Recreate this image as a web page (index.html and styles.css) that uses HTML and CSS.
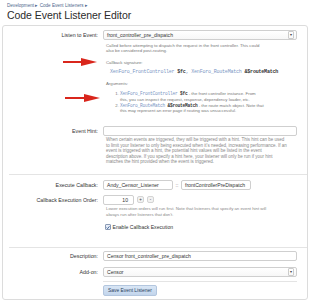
FILE: index.html
```html
<!DOCTYPE html>
<html>
<head>
<meta charset="utf-8">
<link rel="stylesheet" href="styles.css">
</head>
<body>
<div class="breadcrumb"><span>Development</span> ▸ <span>Code Event Listeners</span> ▸</div>
<h1 class="title">Code Event Listener Editor</h1>
<form class="form">
  <div class="row">
    <label class="label">Listen to Event:</label>
    <div class="ctrl">
      <div class="select"><span>front_controller_pre_dispatch</span><span class="arrow">▾</span></div>
      <div class="explain">
        <p class="desc">Called before attempting to dispatch the request in the front controller. This could<br>also be considered post-routing.</p>
        <p class="sub">Callback signature:</p>
        <p class="code sig"><span class="cls">XenForo_FrontController</span> <b>$fc</b>, <span class="cls">XenForo_RouteMatch</span> <b>&amp;$routeMatch</b></p>
        <p class="sub">Arguments:</p>
        <ol class="args">
          <li><span class="code"><span class="cls">XenForo_FrontController</span> <b>$fc</b></span> - the front controller instance. From<br>this, you can inspect the request, response, dependency loader, etc.</li>
          <li><span class="code"><span class="cls">XenForo_RouteMatch</span> <b>&amp;$routeMatch</b></span> - the route match object. Note that<br>this may represent an error page if routing was unsuccessful.</li>
        </ol>
      </div>
    </div>
  </div>
  <div class="row hint-row">
    <label class="label">Event Hint:</label>
    <div class="ctrl">
      <div class="input wide"></div>
      <p class="note hint">When certain events are triggered, they will be triggered with a hint. This hint can be used<br>to limit your listener to only being executed when it's needed, increasing performance. If an<br>event is triggered with a hint, the potential hint values will be listed in the event<br>description above. If you specify a hint here, your listener will only be run if your hint<br>matches the hint provided when the event is triggered.</p>
    </div>
  </div>
  <hr class="divider d1">
  <div class="row">
    <label class="label">Execute Callback:</label>
    <div class="ctrl callback">
      <div class="input cb-class">Andy_Censor_Listener</div>
      <span class="sep">::</span>
      <div class="input cb-method">frontControllerPreDispatch</div>
    </div>
  </div>
  <div class="row order-row">
    <label class="label">Callback Execution Order:</label>
    <div class="ctrl">
      <div class="spin">
        <div class="input num">10</div>
        <span class="btn-s">+</span>
        <span class="btn-s">-</span>
      </div>
      <p class="note order">Lower execution orders will run first. Note that listeners that specify an event hint will<br>always run after listeners that don't.</p>
      <div class="check"><span class="box"><svg viewBox="0 0 10 10" width="5" height="5"><path d="M1.5 5 L4 7.8 L8.8 1.8" fill="none" stroke="#2a4f8a" stroke-width="2"/></svg></span>Enable Callback Execution</div>
    </div>
  </div>
  <hr class="divider d2">
  <div class="row">
    <label class="label">Description:</label>
    <div class="ctrl"><div class="input wide">Censor front_controller_pre_dispatch</div></div>
  </div>
  <div class="row addon-row">
    <label class="label">Add-on:</label>
    <div class="ctrl"><div class="select"><span>Censor</span><span class="arrow">▾</span></div></div>
  </div>
  <hr class="divider last">
  <div class="row submit-row">
    <span></span>
    <div class="ctrl"><span class="button">Save Event Listener</span></div>
  </div>
  <div class="annot a1"></div>
  <div class="annot a2"></div>
</form>
</body>
</html>
```

FILE: styles.css
```css
html, body {
  margin: 0;
  padding: 0;
  background: #fff;
}
body {
  font-family: "Liberation Sans", Arial, sans-serif;
  color: #333;
  width: 317px;
  height: 300px;
  overflow: hidden;
}
p { margin: 0; }
.breadcrumb {
  font-size: 4.6px;
  line-height: 5px;
  color: #50698e;
  padding: 3px 0 0 7px;
}
.title {
  font-size: 10.5px;
  line-height: 13px;
  font-weight: normal;
  color: #2b2b2b;
  margin: 1px 0 0 7px;
  letter-spacing: -0.05px;
}
.form {
  position: relative;
  margin: 3px 9px 0 2px;
  border: 1px solid #dcdcdc;
  border-radius: 3px;
  padding: 4px 0 4px;
  height: 275px;
  box-sizing: border-box;
}
.row {
  display: grid;
  grid-template-columns: 95px 1fr;
  column-gap: 5px;
  padding-right: 10px;
}
.label {
  text-align: right;
  font-size: 5.3px;
  line-height: 10px;
  color: #333;
  white-space: nowrap;
}
.ctrl { font-size: 4.6px; }
.select, .input {
  box-sizing: border-box;
  height: 10px;
  border: 1px solid #cfcfcf;
  border-radius: 2px;
  background: #fff;
  font-size: 5.1px;
  line-height: 8px;
  padding: 0 3px;
  color: #333;
  white-space: nowrap;
}
.select {
  display: flex;
  justify-content: space-between;
  align-items: center;
  background: linear-gradient(#fff, #f7f7f7);
}
.arrow {
  font-size: 4px;
  line-height: 6px;
  border: 1px solid #ccc;
  border-radius: 1px;
  padding: 0 1px;
  margin-right: -1px;
  color: #444;
}
.explain {
  padding: 3px 0 0 3px;
  color: #777;
  font-size: 4.3px;
  line-height: 5.3px;
  white-space: nowrap;
}
.desc { margin-bottom: 6px; }
.sub { margin-bottom: 5px; }
.code {
  font-family: "Liberation Mono", "DejaVu Sans Mono", monospace;
  font-size: 4.5px;
  letter-spacing: -0.2px;
  color: #7a96c4;
}
.code b { color: #333; font-weight: bold; }
.sig {
  font-size: 5px;
  letter-spacing: -0.2px;
  margin: 0 0 6px 4px;
}
.args {
  margin: 0;
  padding-left: 14px;
}
.args li { margin-bottom: 0.5px; }
.hint-row { margin-top: 12px; }
.note {
  color: #888;
  font-size: 4.5px;
  line-height: 5.5px;
  padding: 1.5px 0 0 3px;
  white-space: nowrap;
}
.note.order { font-size: 4.3px; }
.divider {
  border: 0;
  border-top: 1px solid #e4e4e4;
  margin: 0 0 0 6px;
}
.d1 { margin-top: 9px; margin-bottom: 5px; }
.callback {
  display: flex;
  align-items: center;
}
.cb-class { width: 70px; }
.cb-method { width: 70px; }
.sep {
  font-size: 5px;
  color: #555;
  width: 8px;
  text-align: center;
}
.order-row { margin-top: 5px; }
.spin {
  display: flex;
  align-items: center;
  gap: 3px;
}
.num {
  width: 31px;
  text-align: right;
  padding-right: 5px;
}
.btn-s {
  box-sizing: border-box;
  width: 7px;
  height: 7px;
  border: 1px solid #d4d4d4;
  border-radius: 2px;
  background: #f2f2f2;
  font-size: 4.5px;
  line-height: 5px;
  text-align: center;
  color: #444;
}
.check {
  display: flex;
  align-items: center;
  gap: 1.5px;
  margin-top: 7px;
  font-size: 5.1px;
  line-height: 6px;
  color: #333;
}
.box {
  box-sizing: border-box;
  width: 6px;
  height: 6px;
  border: 1px solid #8a9ab5;
  border-radius: 1px;
  background: #e8eef8;
  display: flex;
  align-items: center;
  justify-content: center;
  margin-left: 2px;
}
.d2 { margin-top: 17px; margin-bottom: 3px; }
.addon-row { margin-top: 6px; }
.divider.last { margin: 4px 10px 3px 100px; }
.button {
  display: inline-block;
  margin-left: 0;
  padding: 0 4px;
  height: 9px;
  line-height: 9px;
  font-size: 4.9px;
  color: #2a3e5c;
  background: linear-gradient(#d9e6f5, #c2d5ec);
  border: 1px solid #b3c6de;
  border-radius: 2px;
}
.annot {
  position: absolute;
  height: 2px;
  background: #d9261c;
}
.annot::after {
  content: "";
  position: absolute;
  right: -16px;
  top: -3.5px;
  border-left: 16px solid #d9261c;
  border-top: 4.5px solid transparent;
  border-bottom: 4.5px solid transparent;
}
.a1 { left: 60px; top: 35px; width: 18px; }
.a2 { left: 62px; top: 71px; width: 19px; }
```
